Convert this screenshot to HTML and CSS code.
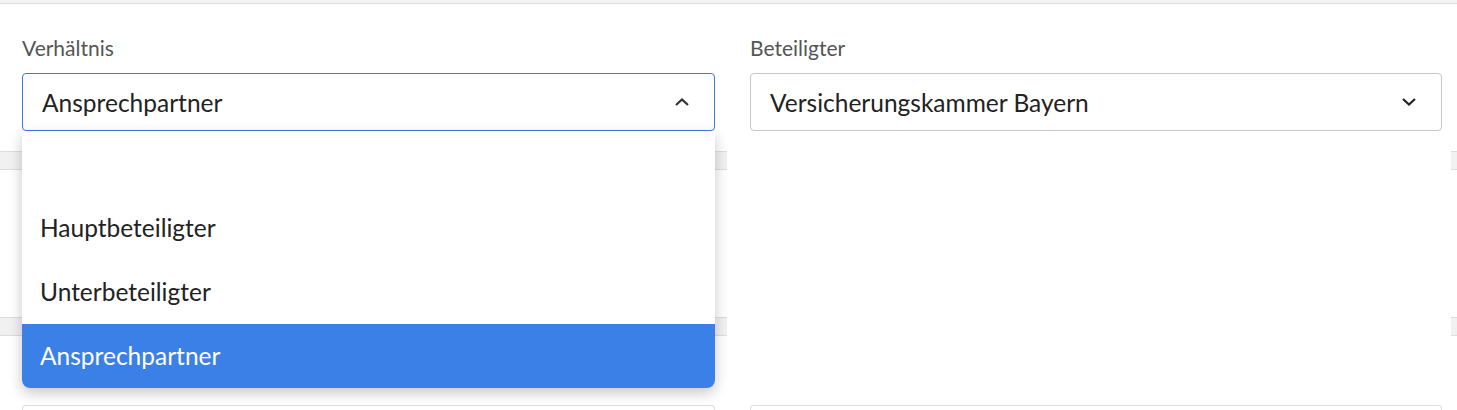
FILE: index.html
```html
<!DOCTYPE html>
<html lang="de">
<head>
<meta charset="utf-8">
<title>Beteiligte</title>
<link rel="stylesheet" href="styles.css">
</head>
<body>
<div class="topbar"></div>
<div class="form-row">
  <div class="field">
    <label class="label">Verhältnis</label>
    <div class="select-wrap">
      <div class="select open">
        <span class="value">Ansprechpartner</span>
        <svg class="chev" width="16" height="10" viewBox="0 0 16 10"><path d="M2 8 L8 2.5 L14 8" fill="none" stroke="#333" stroke-width="2.2"/></svg>
      </div>
      <ul class="menu">
        <li class="opt empty"></li>
        <li class="opt">Hauptbeteiligter</li>
        <li class="opt">Unterbeteiligter</li>
        <li class="opt active">Ansprechpartner</li>
      </ul>
    </div>
  </div>
  <div class="field">
    <label class="label">Beteiligter</label>
    <div class="select">
      <span class="value">Versicherungskammer Bayern</span>
      <svg class="chev" width="16" height="10" viewBox="0 0 16 10"><path d="M2 2 L8 7.5 L14 2" fill="none" stroke="#222" stroke-width="2.2"/></svg>
    </div>
  </div>
</div>
<div class="band-row band-1"><div class="band band-left"></div><div class="band band-right"></div></div>
<div class="band-row band-2"><div class="band band-left"></div><div class="band band-right"></div></div>
<div class="form-row next">
  <div class="ghost"></div>
  <div class="ghost"></div>
</div>
</body>
</html>
```
FILE: styles.css
```css
* { box-sizing: border-box; }
html, body { margin: 0; padding: 0; background: #fff; overflow: hidden; }
body { font-family: Lato, "Open Sans", sans-serif; color: #222; height: 410px; }
.topbar { height: 4px; background: #f3f3f3; border-bottom: 1px solid #dcdcdc; }
.form-row {
  display: grid;
  grid-template-columns: 693px 692px;
  column-gap: 35px;
  padding: 0 15px 0 22px;
}
.field { display: flex; flex-direction: column; }
.label { font-size: 21px; color: #555; margin-top: 33px; height: 36px; line-height: 22px; }
.select-wrap { position: relative; }
.select {
  height: 58px;
  border: 1px solid #c6c6c6;
  border-radius: 4px;
  display: flex;
  align-items: center;
  justify-content: space-between;
  padding: 0 24px 0 19px;
  background: #fff;
}
.select.open { border-color: #3a7bdc; }
.value { font-size: 24.5px; color: #222; }
.chev { display: block; }
.menu {
  position: absolute;
  left: 0; right: 0; top: 58px;
  margin: 0; padding: 0;
  list-style: none;
  background: #fff;
  border-radius: 0 0 8px 8px;
  box-shadow: 0 5px 14px rgba(0,0,0,0.22);
  z-index: 5;
  overflow: hidden;
}
.opt { height: 64px; line-height: 64px; padding-left: 18px; font-size: 24.5px; color: #222; }
.opt.empty { height: 65px; }
.active { background: #3b80e6; color: #fff; }
.band-row { display: flex; justify-content: space-between; height: 19px; }
.band-1 { margin-top: 20px; }
.band-2 { margin-top: 147px; }
.band { height: 19px; background: #f1f1f1; border-top: 1px solid #dddddd; border-bottom: 1px solid #dddddd; }
.band-left { width: 727px; }
.band-right { width: 6px; }
.form-row.next { margin-top: 69px; }
.ghost { height: 5px; border: 1px solid #dedede; border-bottom: none; border-radius: 4px 4px 0 0; }
```
